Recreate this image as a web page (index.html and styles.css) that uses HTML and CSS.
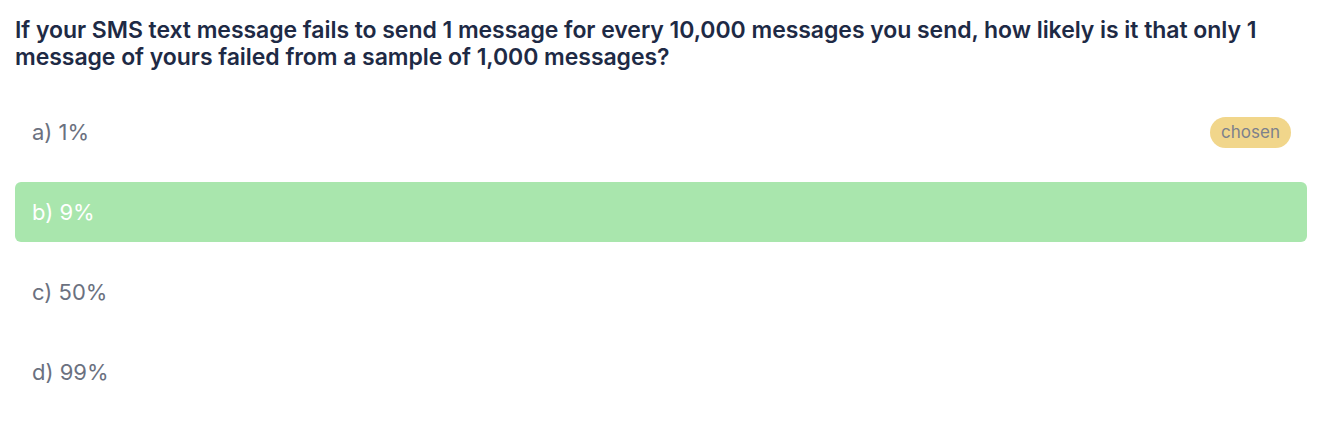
FILE: index.html
```html
<!DOCTYPE html>
<html>
<head>
<meta charset="utf-8">
<link rel="stylesheet" href="styles.css">
</head>
<body>
<div class="quiz">
  <h1 class="question">If your SMS text message fails to send 1 message for every 10,000 messages you send, how likely is it that only 1 message of yours failed from a sample of 1,000 messages?</h1>
  <div class="options">
    <div class="option"><span class="label">a) 1%</span><span class="badge">chosen</span></div>
    <div class="option correct"><span class="label">b) 9%</span></div>
    <div class="option"><span class="label">c) 50%</span></div>
    <div class="option"><span class="label">d) 99%</span></div>
  </div>
</div>
</body>
</html>
```
FILE: styles.css
```css
html, body {
  margin: 0;
  padding: 0;
  background: #ffffff;
}
.quiz {
  padding: 17px 27px 0 15px;
  font-family: "Inter", "Lato", sans-serif;
}
.question {
  margin: 0;
  font-size: 23px;
  line-height: 27px;
  font-weight: 600;
  color: #1e2a45;
  letter-spacing: -0.05px;
}
.options {
  margin-top: 31px;
  display: flex;
  flex-direction: column;
  gap: 20px;
}
.option {
  height: 60px;
  display: flex;
  align-items: center;
  justify-content: space-between;
  padding: 0 16px 0 17px;
  border-radius: 6px;
  box-sizing: border-box;
}
.label {
  font-size: 22px;
  color: #6b7180;
  font-weight: 400;
}
.option.correct {
  background: #a9e6ad;
}
.option.correct .label {
  color: #ffffff;
}
.badge {
  background: #f1d68b;
  color: #7d818c;
  font-size: 17px;
  height: 31px;
  padding: 0 11px;
  border-radius: 16px;
  display: flex;
  align-items: center;
}
```
